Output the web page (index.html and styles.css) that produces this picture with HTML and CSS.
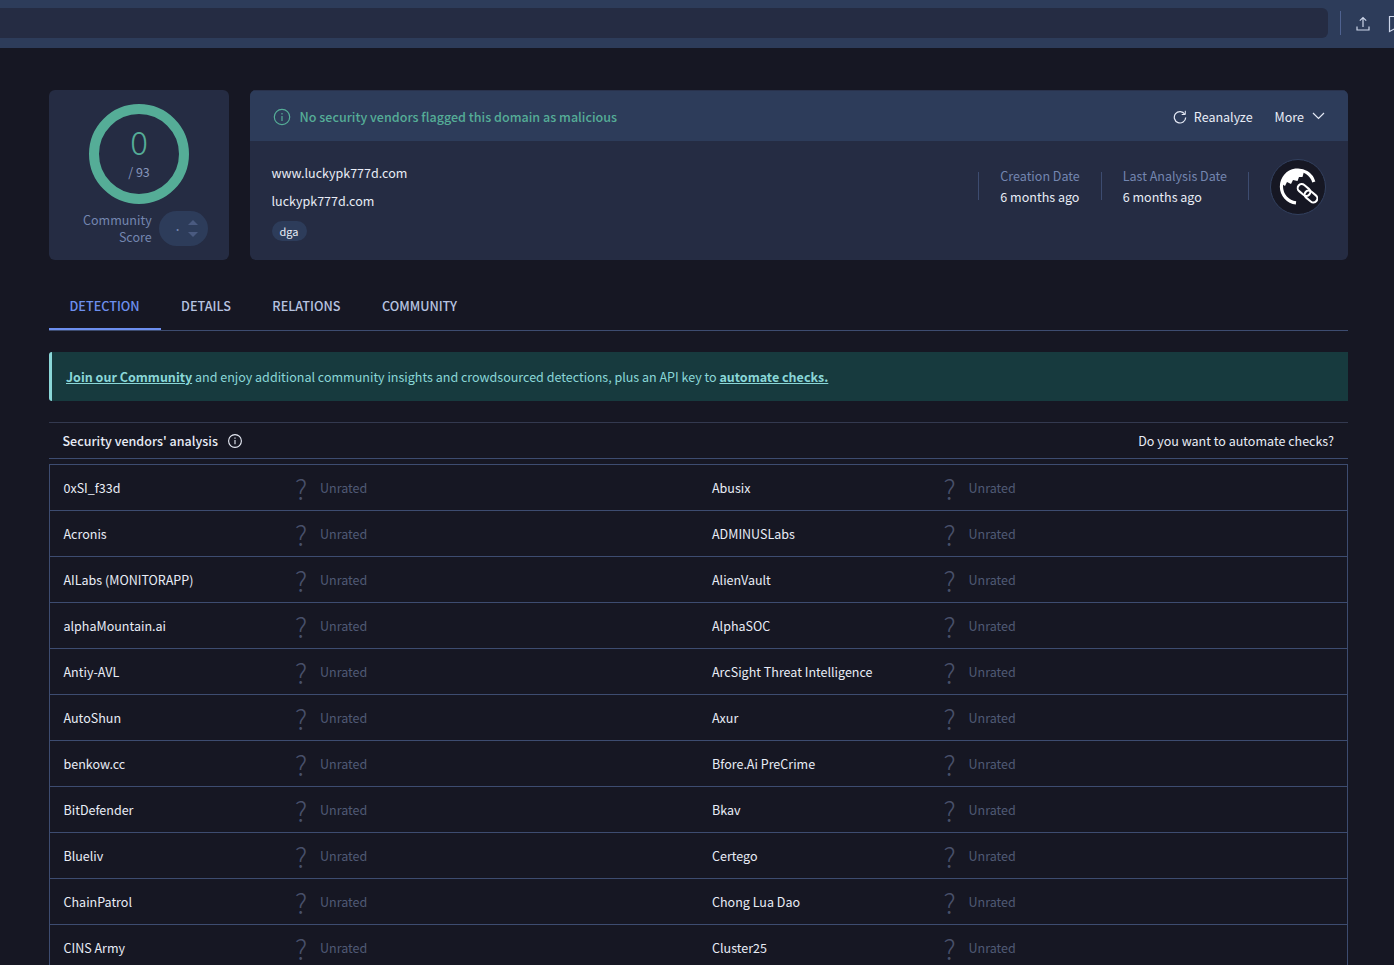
FILE: index.html
```html
<!DOCTYPE html>
<html lang="en">
<head>
<meta charset="utf-8">
<title>VirusTotal - Domain</title>
<link rel="stylesheet" href="styles.css">
</head>
<body>
<header class="topbar">
  <div class="search"></div>
  <div class="topbar-sep"></div>
  <svg class="top-icon" width="16" height="16" viewBox="0 0 16 16" fill="none" stroke="#cdd6ea" stroke-width="1.200"><path d="M8 11V1.500M4.800 4.700 8 1.500l3.200 3.200M2 10.500v3.500h12v-3.500"/></svg>
  <svg class="top-icon bookmark" width="16" height="18" viewBox="0 0 16 18" fill="none" stroke="#cdd6ea" stroke-width="1.200"><path d="M1.500 1.500h13v15l-6.500-3.500-6.500 3.500z"/></svg>
</header>

<main class="page">
  <section class="summary">
    <div class="score-card">
      <div class="ring">
        <svg class="ring-svg" width="100" height="100" viewBox="0 0 100 100"><circle cx="50" cy="50" r="45" fill="none" stroke="#55ad97" stroke-width="10"/></svg>
        <div class="ring-num">0</div>
        <div class="ring-total">/ 93</div>
      </div>
      <div class="community">
        <div class="community-label">Community<br>Score</div>
        <div class="vote">
          <span class="vote-val">·</span>
          <span class="vote-arrows"><i class="up"></i><i class="down"></i></span>
        </div>
      </div>
    </div>

    <div class="info-card">
      <div class="info-head">
        <svg class="info-icon" width="18" height="18" viewBox="0 0 18 18" fill="none" stroke="#55ad97" stroke-width="1.200"><circle cx="9" cy="9" r="7.700"/><path d="M9 8v5M9 5v1.400"/></svg>
        <span class="verdict">No security vendors flagged this domain as malicious</span>
        <span class="head-actions">
          <button class="action">
            <svg width="14" height="14" viewBox="0 0 14 14" fill="none" stroke="#e3e8f4" stroke-width="1.200"><path d="M11.800 4.200A5.700 5.700 0 1 0 12.700 7.500"/><path d="M12.300 .8v3.700H8.700" stroke-width="1"/></svg>
            Reanalyze
          </button>
          <button class="action more">
            More
            <svg width="13" height="8" viewBox="0 0 13 8" fill="none" stroke="#e3e8f4" stroke-width="1.200"><path d="m1 1 5.500 5.500L12 1"/></svg>
          </button>
        </span>
      </div>
      <div class="info-body">
        <div class="domains">
          <div class="domain">www.luckypk777d.com</div>
          <div class="domain">luckypk777d.com</div>
          <span class="tag">dga</span>
        </div>
        <div class="meta">
          <div class="meta-item">
            <div class="meta-label">Creation Date</div>
            <div class="meta-value">6 months ago</div>
          </div>
          <div class="meta-item">
            <div class="meta-label">Last Analysis Date</div>
            <div class="meta-value">6 months ago</div>
          </div>
          <div class="meta-end"></div>
          <div class="domain-badge">
            <svg width="40" height="40" viewBox="0 0 40 40">
              <path d="M35.800 15A16.500 16.500 0 1 0 18 35.900" fill="none" stroke="#fff" stroke-width="3.200"/>
              <path d="M3.500 19A16.500 16.500 0 0 1 26 4.500L24.500 10 21 10 19.500 14 15 13 13 17 9 15 7 19 4 17z" fill="#fff"/>
              <g fill="none">
                <g stroke="#161723" stroke-width="6">
                  <rect x="19" y="19" width="14" height="8" rx="4" transform="rotate(40 26 23)"/>
                  <rect x="26" y="25.500" width="14" height="8" rx="4" transform="rotate(40 33 29.500)"/>
                </g>
                <g stroke="#fff" stroke-width="2">
                  <rect x="19" y="19" width="14" height="8" rx="4" transform="rotate(40 26 23)"/>
                  <rect x="26" y="25.500" width="14" height="8" rx="4" transform="rotate(40 33 29.500)"/>
                </g>
              </g>
            </svg>
          </div>
        </div>
      </div>
    </div>
  </section>

  <nav class="tabs">
    <a class="tab active">DETECTION</a>
    <a class="tab">DETAILS</a>
    <a class="tab">RELATIONS</a>
    <a class="tab">COMMUNITY</a>
  </nav>

  <div class="banner"><a class="strong-link">Join our Community</a> and enjoy additional community insights and crowdsourced detections, plus an API key to <a class="strong-link">automate checks.</a></div>

  <div class="analysis-head">
    <span class="analysis-title">Security vendors' analysis</span>
    <svg width="16" height="16" viewBox="0 0 16 16" fill="none" stroke="#e8ecf6" stroke-width="1.100"><circle cx="8" cy="8" r="6.400"/><path d="M8 7v4.200M8 4.500v1.200"/></svg>
    <span class="analysis-link">Do you want to automate checks?</span>
  </div>

  <div class="vendors" id="vendors">
    <div class="row"><div class="cell"><span class="name">0xSI_f33d</span><span class="q">?</span><span class="unrated">Unrated</span></div><div class="cell"><span class="name">Abusix</span><span class="q">?</span><span class="unrated">Unrated</span></div></div>
    <div class="row"><div class="cell"><span class="name">Acronis</span><span class="q">?</span><span class="unrated">Unrated</span></div><div class="cell"><span class="name">ADMINUSLabs</span><span class="q">?</span><span class="unrated">Unrated</span></div></div>
    <div class="row"><div class="cell"><span class="name">AILabs (MONITORAPP)</span><span class="q">?</span><span class="unrated">Unrated</span></div><div class="cell"><span class="name">AlienVault</span><span class="q">?</span><span class="unrated">Unrated</span></div></div>
    <div class="row"><div class="cell"><span class="name">alphaMountain.ai</span><span class="q">?</span><span class="unrated">Unrated</span></div><div class="cell"><span class="name">AlphaSOC</span><span class="q">?</span><span class="unrated">Unrated</span></div></div>
    <div class="row"><div class="cell"><span class="name">Antiy-AVL</span><span class="q">?</span><span class="unrated">Unrated</span></div><div class="cell"><span class="name">ArcSight Threat Intelligence</span><span class="q">?</span><span class="unrated">Unrated</span></div></div>
    <div class="row"><div class="cell"><span class="name">AutoShun</span><span class="q">?</span><span class="unrated">Unrated</span></div><div class="cell"><span class="name">Axur</span><span class="q">?</span><span class="unrated">Unrated</span></div></div>
    <div class="row"><div class="cell"><span class="name">benkow.cc</span><span class="q">?</span><span class="unrated">Unrated</span></div><div class="cell"><span class="name">Bfore.Ai PreCrime</span><span class="q">?</span><span class="unrated">Unrated</span></div></div>
    <div class="row"><div class="cell"><span class="name">BitDefender</span><span class="q">?</span><span class="unrated">Unrated</span></div><div class="cell"><span class="name">Bkav</span><span class="q">?</span><span class="unrated">Unrated</span></div></div>
    <div class="row"><div class="cell"><span class="name">Blueliv</span><span class="q">?</span><span class="unrated">Unrated</span></div><div class="cell"><span class="name">Certego</span><span class="q">?</span><span class="unrated">Unrated</span></div></div>
    <div class="row"><div class="cell"><span class="name">ChainPatrol</span><span class="q">?</span><span class="unrated">Unrated</span></div><div class="cell"><span class="name">Chong Lua Dao</span><span class="q">?</span><span class="unrated">Unrated</span></div></div>
    <div class="row"><div class="cell"><span class="name">CINS Army</span><span class="q">?</span><span class="unrated">Unrated</span></div><div class="cell"><span class="name">Cluster25</span><span class="q">?</span><span class="unrated">Unrated</span></div></div>
  </div>
</main>
</body>
</html>
```
FILE: styles.css
```css
* { box-sizing: border-box; }
html, body { height: 965px; overflow: hidden; }
body {
  margin: 0;
  background: #161723;
  color: #e8ecf6;
  font-family: "Noto Sans CJK JP", "Noto Sans CJK SC", "Noto Sans", sans-serif;
  font-size: 12.530px;
  line-height: 20px;
}
.topbar {
  height: 48px;
  background: #2d3c5a;
  display: flex;
  align-items: flex-start;
  padding-top: 8px;
  overflow: hidden;
}
.search {
  width: 1328px;
  height: 30px;
  flex: none;
  background: #252c43;
  border-radius: 0 6px 6px 0;
}
.topbar-sep { width: 1px; height: 24px; margin: 3px 0 0 12px; background: #4f6290; flex: none; }
.top-icon { flex: none; margin: 8px 0 0 14px; }
.top-icon.bookmark { margin: 7px 0 0 17px; }

.page { padding: 42px 46px 0 49px; }
.summary { display: flex; gap: 21px; height: 170px; }
.score-card {
  width: 180px;
  flex: none;
  background: #252c43;
  border-radius: 6px;
  padding: 14px 0 0;
  display: flex;
  flex-direction: column;
  align-items: center;
}
.ring { position: relative; width: 100px; height: 100px; }
.ring-svg { display: block; }
.ring-num {
  position: absolute; left: 0; right: 0; top: 20px;
  text-align: center; font-size: 33px; line-height: 34px; font-weight: 300; color: #55ad97;
}
.ring-total {
  position: absolute; left: 0; right: 0; top: 58px;
  text-align: center; line-height: 20px; color: #8595bb;
}
.community { display: flex; align-items: center; gap: 7px; margin-top: 7px; align-self: flex-start; padding-left: 34px; }
.community-label { color: #7486b0; text-align: right; line-height: 17px; margin-top: -2px; }
.vote {
  width: 49px; height: 35px; border-radius: 18px; background: #2d3c5a;
  display: flex; align-items: center; padding-left: 15px; gap: 8px;
}
.vote-val { color: #7486b0; font-size: 14px; line-height: 14px; width: 6px; }
.vote-arrows { display: flex; flex-direction: column; gap: 7px; }
.vote-arrows i { display: block; width: 0; height: 0; border-left: 5px solid transparent; border-right: 5px solid transparent; }
.vote-arrows .up { border-bottom: 5px solid #4a5a80; }
.vote-arrows .down { border-top: 5px solid #4a5a80; }

.info-card { flex: 1; background: #252c43; border-radius: 6px; overflow: hidden; }
.info-head {
  height: 51px; background: #2d3c5a; border-top: 1px solid #29324c; display: flex; align-items: center; padding: 2px 23px 0;
}
.info-icon { flex: none; }
.verdict { color: #55ad97; font-weight: 500; margin-left: 8.500px; letter-spacing: .02px; }
.head-actions { margin-left: auto; display: flex; align-items: center; gap: 22px; }
.action {
  background: none; border: 0; padding: 0; color: #e8ecf6; font: inherit; display: flex; align-items: center; gap: 7px;
}
.action.more { gap: 8px; }
.action.more svg { margin-top: -3px; }
.info-body { display: flex; justify-content: space-between; padding: 22px 23px 0 21.500px; }
.domain { line-height: 20px; margin-bottom: 8px; }
.tag {
  display: inline-block; background: #2d3c5a; border-radius: 10px; height: 20px; line-height: 20px;
  padding: 0 8px; font-size: 11px; margin-top: 2px;
}
.meta { display: flex; align-items: flex-start; margin-top: -2px; }
.meta-item { border-left: 1px solid #3d4c70; padding: 0 21px; height: 28px; margin-top: 11px; }
.meta-end { border-left: 1px solid #3d4c70; height: 28px; margin-top: 11px; }
.meta-label { color: #7486b0; line-height: 21px; margin-top: -7px; }
.meta-value { line-height: 21px; }
.domain-badge {
  width: 56px; height: 56px; border-radius: 50%; background: #161723; border: 1px solid #33415f;
  margin: -2px -1px 0 21px; display: flex; align-items: center; justify-content: center;
}

.tabs { display: flex; height: 50px; margin-top: 21px; border-bottom: 1px solid #3d4c70; }
.tab {
  height: 49px; padding: 15px 21px 0 20.500px; color: #b6c3e0; font-weight: 500; font-size: 12.650px; line-height: 20px;
}
.tab.active { color: #6d8fef; border-bottom: 2px solid #6d8fef; }

.banner {
  margin-top: 21px; height: 49px; background: #173a3e; border-left: 3px solid #8ad7d8; border-radius: 3px 0 0 3px;
  color: #8ad7d8; padding: 15px 0 0 14px;
}
.strong-link { font-weight: 700; text-decoration: underline; }

.analysis-head {
  margin-top: 21px; height: 37px; border-top: 1px solid #33394f; border-bottom: 1px solid #3d4c70;
  display: flex; align-items: center; padding: 0 14px 0 13.500px; gap: 9px;
}
.analysis-title { font-weight: 500; }
.analysis-link { margin-left: auto; }

.vendors { margin-top: 5px; border: solid #3d4c70; border-width: 1px 1px 0; }
.row { display: grid; grid-template-columns: 1fr 1fr; height: 46px; border-bottom: 1px solid #3d4c70; }
.cell { display: flex; align-items: center; padding-left: 13.500px; }
.name { width: 231.500px; flex: none; }
.q { width: 25px; flex: none; font-size: 27px; color: #48506a; font-weight: 300; line-height: 22px; margin-top: 2px; }
.unrated { color: #505a75; }
```
